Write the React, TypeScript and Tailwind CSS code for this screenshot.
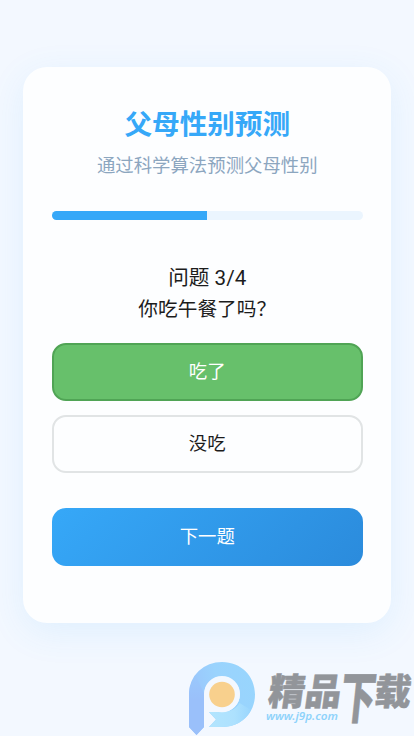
import React, { useState } from 'react';
import clsx from 'clsx';

const options = ['吃了', '没吃'];

function Watermark() {
  return (
    <svg
      className="absolute left-[180px] top-[650px] pointer-events-none"
      width="234"
      height="86"
      viewBox="0 0 234 86"
      aria-hidden="true"
    >
      <defs>
        <linearGradient id="ring" x1="0" y1="0.6" x2="1" y2="0.3">
          <stop offset="0" stopColor="#9ac2fb" />
          <stop offset="0.5" stopColor="#9ad3fd" />
          <stop offset="1" stopColor="#98d5fd" />
        </linearGradient>
        <linearGradient id="tail" x1="0" y1="0" x2="1" y2="0">
          <stop offset="0" stopColor="#b3e5fe" />
          <stop offset="0.6" stopColor="#ade1fe" />
          <stop offset="1" stopColor="#9ad6fd" />
        </linearGradient>
        <linearGradient id="stem" x1="0" y1="0" x2="0" y2="1">
          <stop offset="0" stopColor="#9ac8fc" />
          <stop offset="0.4" stopColor="#9ac0fa" />
        </linearGradient>
      </defs>
      <path
        d="M9 43 A33 31 0 0 1 42 12 C61 12 75 26 75 44.5 C75 63 61 77 42 77 L29 77 L36 69.5 L29 62 L42 62 A18 18 0 1 0 24 44 L24 77 L16.5 85 L9 77 Z"
        fill="url(#ring)"
      />
      <path
        d="M29 62 L42 62 C51 62 57 58 59.5 53 L71 60 C65 71 55 77 42 77 L29 77 L36 69.5 Z"
        fill="url(#tail)"
      />
      <path d="M9 43 Q10 32 16 26 L24 43 L24 77 L16.5 85 L9 77 Z" fill="url(#stem)" />
      <circle cx="42" cy="44.5" r="17.8" fill="#f3f8ff" />
      <circle cx="42" cy="44.5" r="12.8" fill="#f8d08d" />
      <g
        fill="#92959a"
        stroke="#92959a"
        strokeWidth="0.5"
        fontFamily="'Noto Sans CJK SC', sans-serif"
        fontWeight="900"
      >
        <text transform="translate(87 55) skewX(-8)" fontSize="37" textLength="73" lengthAdjust="spacingAndGlyphs">
          精品
        </text>
        <text transform="translate(158.5 67.5) skewX(-6) scale(0.78 1.24)" fontSize="45">
          下
        </text>
        <text transform="translate(193.5 54.5) skewX(-6)" fontSize="36.5">
          载
        </text>
      </g>
      <text
        x="86"
        y="69.5"
        fill="#8fd3fb"
        fontFamily="'Noto Sans', 'Open Sans', sans-serif"
        fontSize="11.5"
        fontWeight="600"
        fontStyle="italic"
        textLength="72"
        lengthAdjust="spacingAndGlyphs"
      >
        www.j9p.com
      </text>
    </svg>
  );
}

export default function App() {
  const [selected, setSelected] = useState(0);

  return (
    <div
      lang="zh-CN"
      className="relative h-[736px] w-[414px] overflow-hidden bg-[#f3f8ff] pt-[67px] font-['Roboto','Noto_Sans_CJK_SC',sans-serif]"
    >
      <main className="mx-auto h-[555.5px] w-[368px] rounded-[24px] bg-[#fdfeff] pl-[29px] pr-[28.5px] pt-[38px] text-center shadow-[0_9px_36px_rgba(54,168,248,0.1)]">
        <h1 className="text-[27.6px] font-bold leading-[40px] text-[#36a8f8]">父母性别预测</h1>
        <p className="mt-[7px] text-[18.4px] leading-[28px] text-[#8ca6bf]">通过科学算法预测父母性别</p>

        <div className="mt-[31px] h-[9px] overflow-hidden rounded-full bg-[#ebf5fe]">
          <div className="h-full w-1/2 bg-[#36a8f8]" />
        </div>

        <h2 className="mt-[42px] text-[20.6px] leading-8 text-[#1c1c1c]">问题 3/4</h2>
        <h3 className="text-[19.7px] leading-8 text-[#1c1c1c]">你吃午餐了吗？</h3>

        <div className="mt-[17px] flex flex-col gap-[14px]">
          {options.map((option, index) => (
            <button
              key={option}
              onClick={() => setSelected(index)}
              className={clsx(
                'h-[58px] rounded-[14px] border-2 text-[18.4px]',
                selected === index
                  ? 'border-[#50a455] bg-[#67c06b] text-white'
                  : 'border-[#e1e4e5] bg-[#fdfeff] text-[#1c1c1c]'
              )}
            >
              {option}
            </button>
          ))}
        </div>

        <button className="mt-[35px] h-[58px] w-full rounded-[14px] bg-linear-135 from-[#36a8f8] to-[#2b8bdc] text-[18.4px] text-white">
          下一题
        </button>
      </main>

      <Watermark />
    </div>
  );
}
